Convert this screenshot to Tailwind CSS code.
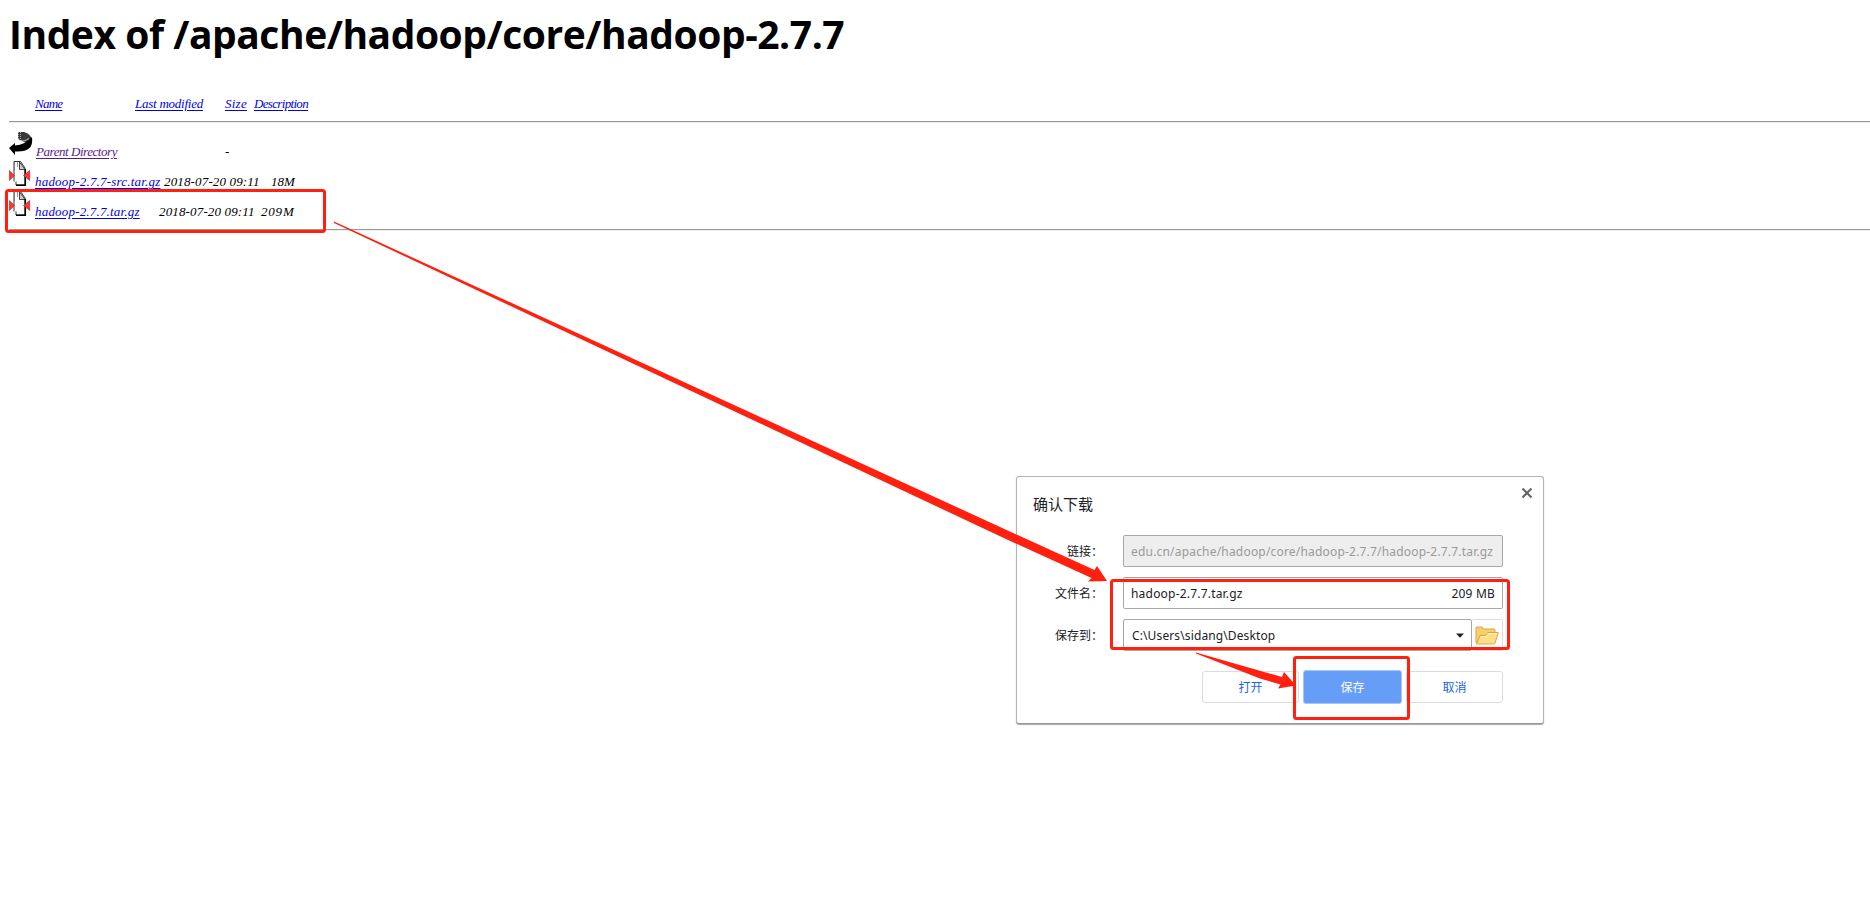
<!DOCTYPE html>
<html lang="zh">
<head>
<meta charset="utf-8">
<title>Index of /apache/hadoop/core/hadoop-2.7.7</title>
<script src="https://cdn.jsdelivr.net/npm/@tailwindcss/browser@4"></script>
</head>
<body class="relative w-[1870px] h-[906px] overflow-hidden bg-white text-black">
<main class="pl-[9px]">
  <h1 class="h-[68px] pt-[7px] text-[39px] leading-[54px] font-bold whitespace-nowrap font-['Open_Sans','Noto_Sans',sans-serif] tracking-[-0.45px]">Index of /apache/hadoop/core/hadoop-2.7.7</h1>
  <div class="font-['Liberation_Serif',serif] italic text-[13px] leading-[16px] whitespace-nowrap">
    <div class="flex h-[53px] items-start pt-[28px] pl-[26px] text-[#0000ee]">
      <a class="w-[100px] tracking-[-0.75px]"><span class="underline underline-offset-2">Name</span></a>
      <a class="w-[90px] tracking-[-0.24px]"><span class="underline underline-offset-2">Last modified</span></a>
      <a class="w-[29px] tracking-[0.25px]"><span class="underline underline-offset-2">Size</span></a>
      <a class="tracking-[-0.67px]"><span class="underline underline-offset-2">Description</span></a>
    </div>
    <hr class="h-[2px] border-0 border-t border-b border-t-[#9a9a9a] border-b-[#eeeeee]">
    <div class="pt-[8px] h-[106px]">
      <div class="flex h-[30px]">
        <svg class="w-[24px] h-[24px] mr-[3px]" viewBox="0 0 24 24"><path d="M9 1h6q7 2 8 8l-6 3-8-4z" fill="#383838"/><path d="M9.500 1v8M11.500 1v7" stroke="#aaa" stroke-dasharray="1 1"/><path d="M23 6q.8 6-1.500 10-4 5-15.500 4.500V24L0 17l6-5v2.500q10-.5 17-8.500z" fill="#000"/><path d="M10 9.500q5 2 10-2" fill="none" stroke="#ddd" stroke-width=".8"/></svg>
        <a class="w-[189px] pt-[13px] text-[#551a8b] tracking-[-0.45px]"><span class="underline underline-offset-2">Parent Directory</span></a>
        <span class="pt-[13px]">-</span>
      </div>
      <div class="flex h-[30px]">
        <svg class="w-[22px] h-[26px] mr-[4px]" viewBox="0 0 22 26"><path d="M5 20.500V.5h6.500l4.500 6.500V24H7v-3.500" fill="#fff" stroke="#333"/><path d="M5.500 1v9M8.500 1v5" stroke="#777" stroke-width=".8"/><path d="M10.500 1v7.500H16z" fill="#ccc" stroke="#222" stroke-width=".8"/><path d="M7 24.300h9.300V8" fill="none" stroke="#000" stroke-width="1.500"/><path d="M.3 9.500l5.200 5-5.200 5zM20.700 9.500l-6.200 5 6.200 5z" fill="#f33" stroke="#a33" stroke-width=".7"/></svg>
        <a class="w-[129px] pt-[13px] text-[#0000ee] tracking-[0.2px]"><span class="underline underline-offset-2">hadoop-2.7.7-src.tar.gz</span></a>
        <span class="w-[107px] pt-[13px] tracking-[0.15px]">2018-07-20 09:11</span><span class="pt-[13px]">18M</span>
      </div>
      <div class="flex h-[30px]">
        <svg class="w-[22px] h-[26px] mr-[4px]" viewBox="0 0 22 26"><path d="M5 20.500V.5h6.500l4.500 6.500V24H7v-3.500" fill="#fff" stroke="#333"/><path d="M5.500 1v9M8.500 1v5" stroke="#777" stroke-width=".8"/><path d="M10.500 1v7.500H16z" fill="#ccc" stroke="#222" stroke-width=".8"/><path d="M7 24.300h9.300V8" fill="none" stroke="#000" stroke-width="1.500"/><path d="M.3 9.500l5.200 5-5.200 5zM20.700 9.500l-6.200 5 6.200 5z" fill="#f33" stroke="#a33" stroke-width=".7"/></svg>
        <a class="w-[124px] pt-[13px] text-[#0000ee] tracking-[0.19px]"><span class="underline underline-offset-2">hadoop-2.7.7.tar.gz</span></a>
        <span class="w-[102px] pt-[13px] tracking-[0.15px]">2018-07-20 09:11</span><span class="pt-[13px] tracking-[0.8px]">209M</span>
      </div>
    </div>
    <hr class="h-[2px] border-0 border-t border-b border-t-[#9a9a9a] border-b-[#eeeeee]">
  </div>
</main>

<section class="absolute left-[1016px] top-[476px] w-[528px] h-[248px] flex flex-col rounded-[3px] border border-[#b4b4b4] border-b-[#999] bg-white shadow-[0_1px_1px_#aaa] text-[12px] text-[#202124] font-['Noto_Sans','Noto_Sans_CJK_SC',sans-serif]">
  <header class="flex h-[58px] justify-between pl-[16px] pr-[10px]">
    <h2 class="pt-[17px] text-[15px] leading-[20px]">确认下载</h2>
    <svg class="mt-[10px] w-[12px] h-[12px]" viewBox="0 0 12 12"><path d="M1.500 1.500l9 9M10.500 1.500l-9 9" stroke="#5f6368" stroke-width="2"/></svg>
  </header>
  <div class="flex flex-col gap-[10px] pr-[40px]">
    <div class="flex h-[32px] items-center">
      <label class="w-[106px] pt-[2px] pr-[20px] text-right">链接：</label>
      <div class="flex h-[32px] flex-1 items-center rounded-[2px] border border-[#a8a8a8] bg-[#eee] pt-[2px] pl-[7px] text-[#9a9a9a] whitespace-nowrap tracking-[0.19px]">edu.cn/apache/hadoop/core/hadoop-2.7.7/hadoop-2.7.7.tar.gz</div>
    </div>
    <div class="flex h-[32px] items-center">
      <label class="w-[106px] pt-[2px] pr-[20px] text-right">文件名：</label>
      <div class="flex h-[32px] flex-1 items-center justify-between rounded-[2px] border border-[#a8a8a8] pt-[2px] px-[7px] tracking-[0.2px]"><span>hadoop-2.7.7.tar.gz</span><span>209 MB</span></div>
    </div>
    <div class="flex h-[32px] items-center">
      <label class="w-[106px] pt-[2px] pr-[20px] text-right">保存到：</label>
      <div class="flex h-[32px] flex-1 items-center justify-between rounded-[2px] border border-[#a8a8a8] pl-[8px] pr-[7px] tracking-[0.12px]"><span class="pt-[2px]">C:\Users\sidang\Desktop</span><svg class="w-[8px] h-[5px]" viewBox="0 0 8 5"><path d="M0 .5h8L4 4.800z" fill="#202124"/></svg></div>
      <div class="flex h-[32px] w-[31px] items-center justify-center rounded-[2px] border border-l-0 border-[#dadce0]">
        <svg class="w-[24px] h-[19px]" viewBox="0 0 24 19"><path d="M1 17V2q0-1 1-1h5l1.500 2H19q1 0 1 1v3" fill="#f7cf6a" stroke="#d9a54a"/><path d="M1.500 18L5 9.500h5.500L13 6.500h10.300L20 17q-.3 1-1.500 1z" fill="#ffdf85" stroke="#d9a54a"/><path d="M6 10.500h5l2.500-3H22" stroke="#fff3c2" fill="none"/></svg>
      </div>
    </div>
  </div>
  <footer class="mt-[19px] flex items-center justify-end gap-[4px] pr-[40px] text-[#1a66e8]">
    <button class="h-[32px] w-[97px] rounded-[3px] border border-[#dadce0] pt-[2px]">打开</button>
    <button class="h-[34px] w-[99px] rounded-[3px] border border-[#a5c5fb] bg-[#669df6] pt-[2px] text-white">保存</button>
    <button class="h-[32px] w-[97px] rounded-[3px] border border-[#dadce0] pt-[2px]">取消</button>
  </footer>
</section>

<!-- red annotation boxes and arrows -->
<svg class="absolute left-0 top-0 w-[1870px] h-[906px] pointer-events-none" viewBox="0 0 1870 906">
  <g fill="none" stroke="#ff2010" stroke-width="3">
    <rect x="6.500" y="190.500" width="318" height="41" rx="2"/>
    <rect x="1111.500" y="580.500" width="397" height="68" rx="2"/>
    <rect x="1294.500" y="657.500" width="114" height="61" rx="2"/>
  </g>
  <g fill="#ff2010">
    <path d="M334 221.500L1011 532L1094.500 570L1097 566L1107 581L1088 581.500L1091.500 578L1007 539.500L334 223z"/>
    <path d="M1196 652.500L1282 677L1284 672L1296 685.500L1278 688.500L1280.500 684.500L1260 678.500L1196 653.500z"/>
  </g>
</svg>
</body>
</html>
